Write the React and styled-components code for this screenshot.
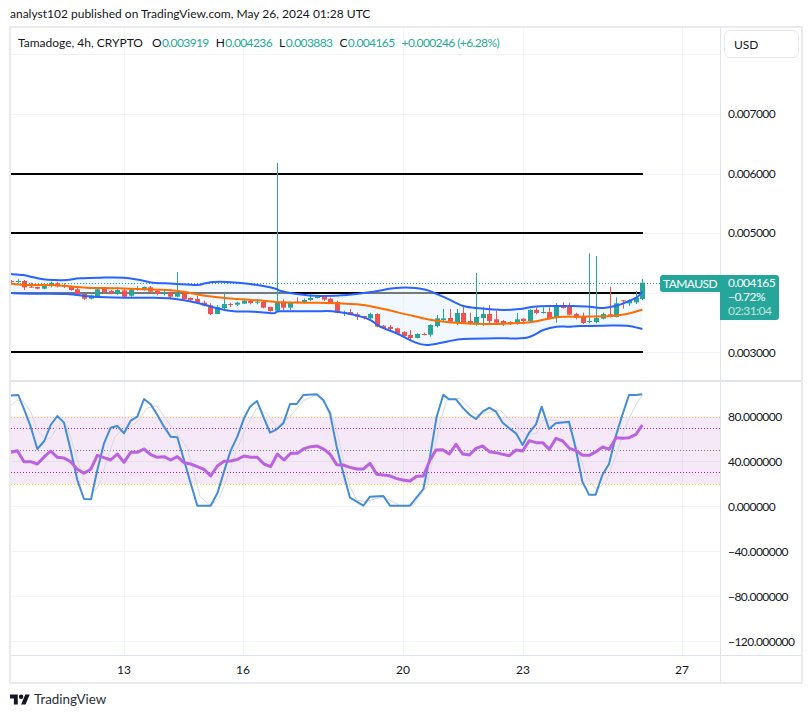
import React from "react";
import styled, { createGlobalStyle } from "styled-components";

const GlobalStyle = createGlobalStyle`
  html, body { margin: 0; padding: 0; background: #fff; }
  #root { width: 812px; height: 718px; overflow: hidden; }
`;
const font = `"Lato", "Noto Sans", "DejaVu Sans", sans-serif`;
const Page = styled.div`
  width: 812px; height: 718px; background: #fff; color: #131722;
  font-family: ${font}; font-size: 12px; display: flex; flex-direction: column;
`;
const Header = styled.div`
  height: 26px; padding-left: 10px; display: flex; align-items: center;
  font-size: 12px; white-space: nowrap;
`;
const Frame = styled.div`
  width: 794px; height: 658px; margin-left: 9px; box-sizing: border-box;
  border: 2px solid #e8eaf0; display: grid;
  grid-template-columns: 709px 81px; grid-template-rows: 352px 275px 27px;
`;
const Pane = styled.div`
  position: relative; overflow: hidden; box-sizing: border-box;
  ${(p) => (p.$divided ? "border-top: 2px solid #e0e3eb;" : "")}
`;
const PaneSvg = styled.svg`display: block;`;
const Legend = styled.div`
  position: absolute; left: 7px; top: 6px; display: flex; align-items: center;
  height: 17px; white-space: nowrap; font-size: 12px; letter-spacing: -0.6px;
`;
const Symbol = styled.span`margin-right: 9px; letter-spacing: 0;`;
const Ohlc = styled.span`
  margin-right: 7px; color: #131722;
  b { font-weight: 400; color: #22ab94; margin-left: 1px; }
`;
const Change = styled.span`color: #22ab94;`;
const Axis = styled.div`
  position: relative; box-sizing: border-box; border-left: 1px solid #e0e3eb;
  padding-left: 7px; letter-spacing: -0.55px;
  ${(p) => (p.$divided ? "border-top: 2px solid #e0e3eb;" : "")}
  ${(p) => (p.$pad ? `padding-top: ${p.$pad}px;` : "")}
`;
const CurrencyBox = styled.div`
  box-sizing: border-box; width: 75px; height: 28px; margin: 2px 0 0 -4px; padding-left: 9px;
  display: flex; align-items: center; border: 1px solid #e8eaf0; border-radius: 6px;
  letter-spacing: 0;
`;
const Ticks = styled.div`margin-top: 26px;`;
const Tick = styled.div`
  height: ${(p) => p.$h}px; display: flex; align-items: center; white-space: nowrap;
  ${(p) => (p.$hidden ? "visibility: hidden;" : "")}
`;
const PriceBadge = styled.div`
  position: absolute; left: -1px; top: 247px; width: 59px; height: 45px; box-sizing: border-box;
  background: #26a69a; color: #fff; border-radius: 0 3px 3px 0; padding: 1px 0 0 8px;
  display: flex; flex-direction: column; line-height: 14px;
`;
const Timer = styled.span`opacity: 0.7;`;
const TickerBadge = styled.div`
  position: absolute; right: 100%; top: 0; width: 60px; height: 17px; margin-right: 0;
  background: #26a69a; color: #fff; border-radius: 3px 0 0 3px;
  display: flex; align-items: center; justify-content: center;
`;
const TimeAxis = styled.div`
  box-sizing: border-box; border-top: 1px solid #e0e3eb; display: flex; align-items: center;
`;
const AxisCorner = styled.div`border-top: 1px solid #e0e3eb; border-left: 1px solid #e0e3eb;`;
const TimeLabel = styled.span`
  flex: 0 0 40px; margin-left: ${(p) => p.$m}px; text-align: center;
`;
const Footer = styled.div`
  display: flex; align-items: center; gap: 4px; padding: 7px 0 0 10px;
  font-size: 13.4px; color: #2a2e39;
`;

const rows = (x0, y0, list) =>
  list.map(([x, k, bt, bb, wt, wb]) => ({
    x: Math.round(x0 + x / 3) + 0.5, up: k === "u",
    bt: y0 + bt / 3, bb: y0 + bb / 3, wt: y0 + wt / 3, wb: y0 + wb / 3,
  }));

const candles = [
  ...rows(0, 260, [
    [34,"d",63,66,60,68],[55,"u",63,66,58,70],[73,"d",63,82,60,90],[94,"d",80,82,68,84],[112,"d",81,86,80,88],
    [133,"u",75,86,70,88],[154,"u",69,78,65,82],[172,"d",70,79,66,82],[193,"d",77,79,70,84],[213,"d",80,90,78,92],
    [232,"d",88,104,84,107],[253,"d",102,116,100,120],[274,"u",107,116,104,118],[292,"u",88,109,86,111],[313,"d",87,96,82,102],
    [334,"d",93,101,90,103],[352,"u",90,101,82,104],[373,"d",91,110,88,112],[394,"u",88,107,85,110],[412,"u",86,88,78,92],
    [432,"u",81,90,80,92],[451,"d",82,95,78,97],[472,"d",92,102,90,106],[492,"u",98,100,92,106],[511,"d",98,110,95,119],
    [532,"u",100,110,36,112],[553,"d",100,117,96,119],[571,"d",114,120,112,125],[592,"d",117,128,108,132],[612,"d",128,137,122,139],
    [631,"d",136,162,130,165],[652,"u",141,162,135,163],[673,"u",132,144,100,147],[691,"d",132,134,128,141],[712,"u",128,134,125,138],
    [731,"u",122,131,118,132],[751,"d",123,129,120,133],[772,"u",125,127,117,133],[790,"d",126,143,124,145],[811,"d",141,153,140,155],
    [832,"u",125,152,-291,153],[850,"d",125,143,118,152],[869,"u",127,143,125,150],
  ]),
  ...rows(280, 270, [
    [51,"d",95,97,82,100],[71,"u",90,99,85,100],[91,"u",84,90,72,93],[111,"u",80,84,75,85],[131,"d",81,89,79,93],
    [151,"d",86,99,83,102],[172,"d",96,128,92,130],[191,"u",126,128,122,138],[211,"d",126,134,117,136],[230,"d",133,140,127,150],
    [251,"d",138,142,138,148],[271,"u",132,145,128,148],[290,"d",132,170,130,172],[310,"d",167,174,165,176],[331,"d",171,177,165,180],
    [350,"d",175,191,173,192],[371,"d",186,198,184,200],[391,"d",195,204,180,210],[410,"u",192,204,190,205],[431,"d",192,194,188,196],
    [451,"u",165,194,163,200],[470,"u",145,168,135,172],[490,"u",145,150,117,155],[509,"d",144,155,117,158],[530,"u",129,158,117,165],
    [550,"d",129,158,105,162],[569,"d",153,162,128,164],[589,"u",141,163,9,167],[610,"u",132,144,112,168],[628,"d",132,153,105,164],
    [649,"d",148,158,123,160],[670,"d",153,162,150,168],[690,"d",156,161,154,165],[710,"u",148,162,129,164],[730,"d",146,153,145,163],
    [749,"u",120,153,118,154],[769,"d",120,129,112,133],[788,"u",126,129,112,131],[808,"d",126,145,112,148],[828,"u",106,144,99,158],
    [848,"d",106,114,97,116],[868,"d",110,134,98,136],
  ]),
  ...rows(560, 240, [
    [49,"d",222,234,218,238],[68,"d",229,249,218,252],[88,"u",243,245,40,250],[109,"u",234,246,48,250],[128,"u",222,236,218,238],
    [149,"d",223,231,140,232],[169,"u",190,231,172,232],[189,"d",181,183,180,206],[208,"u",182,190,178,198],[229,"u",173,187,153,192],
    [247,"u",128,177,117,180],
  ]),
];

const pts = (x0, y0, list) => list.map(([x, y]) => [x0 + x / 3, y0 + y / 3]);

const upper = [
  ...pts(0,260,[[30,42],[70,45],[100,52],[130,58],[160,60],[200,60],[240,55],[300,53],[370,53],[420,60],[460,68],[520,71],[590,75],[615,70],[640,66],[680,66],[730,70],[790,78],[830,87]]),
  ...pts(280,270,[[0,62],[50,72],[120,78],[200,75],[280,65],[340,55],[390,53],[440,60],[500,85],[550,108],[600,115],[670,120],[720,117],[760,110],[820,108],[860,108]]),
  ...pts(560,240,[[30,198],[88,200],[130,204],[165,198],[190,190],[230,172],[247,155]]),
];
const middle = [
  ...pts(0,260,[[30,71],[90,75],[170,76],[260,83],[350,85],[430,88],[500,90],[560,97],[620,108],[700,116],[790,122],[830,126]]),
  ...pts(280,270,[[0,97],[100,98],[230,103],[300,115],[400,138],[470,152],[550,160],[620,162],[700,160],[760,155],[820,143],[860,140]]),
  ...pts(560,240,[[30,230],[60,230],[150,228],[200,222],[247,209]]),
];
const lower = [
  ...pts(0,260,[[30,99],[100,101],[200,102],[280,110],[370,113],[450,113],[520,116],[590,128],[650,145],[700,154],[760,155],[820,160]]),
  ...pts(280,270,[[0,124],[100,124],[170,125],[260,145],[300,170],[350,190],[400,215],[440,225],[500,215],[550,207],[650,205],[740,203],[790,180],[830,170],[860,170]]),
  ...pts(560,240,[[30,260],[60,258],[130,257],[200,257],[247,267]]),
];

const kLine = [
  ...pts(0,380,[[30,47],[55,45],[75,95],[92,140],[112,207],[133,183],[152,135],[172,108],[192,128],[212,210],[232,300],[252,357],[273,358],[292,270],[312,190],[332,143],[352,138],[372,160],[392,122],[412,110],[432,57],[452,73],[472,105],[492,140],[512,170],[532,172],[552,240],[572,310],[592,377],[632,377],[652,340],[672,275],[692,212],[712,170],[732,115],[750,80],[771,63],[790,110],[810,158],[830,148],[850,130],[870,72],[890,72],[910,45],[950,43],[970,60],[990,100]]),
  ...pts(330,380,[[20,200],[40,280],[60,353],[100,377],[120,350],[160,348],[180,377],[240,377],[280,327],[300,230],[320,110],[340,44],[357,58],[378,58],[400,85],[420,105],[438,117],[458,95],[478,83],[498,95],[518,128],[538,145],[558,160],[578,195],[598,157],[618,133],[635,80],[657,147],[677,130],[717,125],[737,205],[757,305],[777,344],[797,344],[817,285],[837,252],[857,170],[877,105],[897,45],[917,45],[937,43]]),
];
const dLine = [
  ...pts(0,380,[[30,80],[50,60],[70,65],[92,95],[112,150],[133,177],[152,175],[172,140],[192,125],[212,170],[232,240],[252,300],[285,332],[300,310],[320,240],[345,170],[372,145],[400,135],[420,115],[440,85],[470,78],[500,120],[532,165],[560,200],[580,270],[600,350],[632,377],[660,350],[690,270],[710,210],[740,140],[770,85],[800,100],[830,140],[870,110],[910,62],[950,43],[990,90]]),
  ...pts(330,380,[[20,150],[40,240],[60,320],[80,360],[105,365],[160,350],[210,377],[250,375],[290,320],[310,230],[330,130],[350,60],[390,55],[440,105],[510,90],[550,130],[590,165],[620,160],[640,120],[680,122],[717,130],[740,200],[770,290],[800,330],[830,300],[860,220],[890,130],[920,70],[937,47]]),
];
const rsi = [
  ...pts(0,380,[[30,217],[52,212],[72,245],[92,245],[112,252],[133,230],[152,213],[172,232],[192,234],[212,245],[232,268],[252,280],[272,268],[292,226],[312,233],[332,240],[352,222],[372,247],[392,217],[412,217],[432,207],[452,224],[472,232],[492,230],[512,240],[532,230],[552,248],[572,252],[592,260],[612,268],[632,288],[652,258],[672,244],[692,243],[712,238],[732,228],[752,232],[772,232],[792,252],[812,260],[832,222],[852,240],[872,220],[892,220],[912,206],[932,200],[952,198],[972,208],[990,222]]),
  ...pts(330,380,[[20,254],[40,255],[60,262],[80,267],[100,267],[120,250],[140,283],[178,287],[198,295],[218,300],[240,303],[260,289],[280,288],[300,240],[318,210],[338,209],[358,222],[378,193],[398,222],[418,225],[438,205],[458,198],[478,215],[498,218],[518,223],[538,227],[558,210],[578,213],[598,182],[618,188],[638,188],[658,208],[678,175],[698,183],[718,205],[738,212],[758,226],[778,226],[798,215],[818,201],[838,208],[858,173],[878,175],[898,173],[918,163],[937,135]]),
];

const smooth = (p) => {
  let d = `M${p[0][0]} ${p[0][1]}`;
  for (let i = 0; i < p.length - 1; i++) {
    const a = p[Math.max(i - 1, 0)], b = p[i], c = p[i + 1], e = p[Math.min(i + 2, p.length - 1)];
    d += `C${b[0] + (c[0] - a[0]) / 6} ${b[1] + (c[1] - a[1]) / 6} ${c[0] - (e[0] - b[0]) / 6} ${c[1] - (e[1] - b[1]) / 6} ${c[0]} ${c[1]}`;
  }
  return d;
};
const poly = (p) => p.map((q) => q.join(",")).join(" ");
const bandFill = poly([...upper, ...[...lower].reverse()]);

const vGrid = [124.5, 243.5, 403.5, 523.5, 682.5];
const GRID = "#f0f3fa";

function VerticalGrid({ y1, y2 }) {
  return vGrid.map((x) => <line key={x} x1={x} x2={x} y1={y1} y2={y2} stroke={GRID} />);
}

function MainChart() {
  return (
    <PaneSvg width="709" height="352" viewBox="11 28 709 352">
      <VerticalGrid y1={28} y2={380} />
      {[54.5, 114.5, 174.5, 233.5, 293.5, 352.5].map((y) => (
        <line key={y} x1="11" x2="720" y1={y} y2={y} stroke={GRID} />
      ))}
      {[174, 233, 293, 352].map((y) => (
        <line key={y} x1="10" x2="643" y1={y} y2={y} stroke="#000" strokeWidth="2" />
      ))}
      <polygon points={bandFill} fill="#e3f2fd" fillOpacity="0.5" />
      <line x1="11" x2="660" y1="283.5" y2="283.5" stroke="#26a69a" strokeDasharray="1 2" />
      {candles.map((c, i) => {
        const col = c.up ? "#26a69a" : "#ef5350";
        return (
          <g key={i}>
            <line x1={c.x} x2={c.x} y1={c.wt} y2={c.wb} stroke={col} />
            <rect x={c.x - 2.5} y={c.bt} width="5" height={Math.max(c.bb - c.bt, 1)} fill={col} />
          </g>
        );
      })}
      <path d={smooth(upper)} fill="none" stroke="#2962ff" strokeWidth="2" />
      <path d={smooth(lower)} fill="none" stroke="#2962ff" strokeWidth="2" />
      <path d={smooth(middle)} fill="none" stroke="#ff6d00" strokeWidth="2" />
    </PaneSvg>
  );
}

function Oscillator() {
  return (
    <PaneSvg width="709" height="273" viewBox="11 382 709 273">
      <VerticalGrid y1={382} y2={655} />
      {[416.5, 461.5, 506.5, 551.5, 596.5, 641.5].map((y) => (
        <line key={y} x1="11" x2="720" y1={y} y2={y} stroke={GRID} />
      ))}
      <rect x="11" y="417" width="709" height="67" fill="#9c27b0" fillOpacity="0.1" />
      <line x1="11" x2="720" y1="417.5" y2="417.5" stroke="#f5c242" strokeDasharray="1 2" />
      <line x1="11" x2="720" y1="484.5" y2="484.5" stroke="#ffd600" strokeDasharray="1 2" />
      <line x1="11" x2="720" y1="428.5" y2="428.5" stroke="#a81bc0" strokeDasharray="1 2" />
      <line x1="11" x2="720" y1="472.5" y2="472.5" stroke="#a81bc0" strokeDasharray="1 2" />
      <line x1="11" x2="720" y1="450.5" y2="450.5" stroke="#787b86" strokeDasharray="1 2" />
      <polyline points={poly(dLine)} fill="none" stroke="#d8dae2" strokeWidth="1" />
      <polyline points={poly(kLine)} fill="none" stroke="#428cd8" strokeWidth="2" strokeLinejoin="round" />
      <polyline points={poly(rsi)} fill="none" stroke="#bb62e0" strokeWidth="3" strokeLinejoin="round" />
    </PaneSvg>
  );
}

const Logo = () => (
  <svg width="20" height="15" viewBox="0 2 36 22" fill="#131722">
    <path d="M14 22H7V11H0V4h14v18zM28 22h-8l7.5-18h8L28 22z" />
    <circle cx="20" cy="8" r="4" />
  </svg>
);

const priceTicks = [["0.007000"],["0.006000"],["0.005000"],["0.004000", true],["0.003000"]];
const oscTicks = ["80.000000","40.000000","0.000000","−40.000000","−80.000000","−120.000000"];
const times = [["13",93],["16",79],["20",120],["23",80],["27",119]];

export default function App() {
  return (
    <Page>
      <GlobalStyle />
      <Header>analyst102 published on TradingView.com, May 26, 2024 01:28 UTC</Header>
      <Frame>
        <Pane>
          <MainChart />
          <Legend>
            <Symbol>Tamadoge, 4h, CRYPTO</Symbol>
            <Ohlc>O<b>0.003919</b></Ohlc>
            <Ohlc>H<b>0.004236</b></Ohlc>
            <Ohlc>L<b>0.003883</b></Ohlc>
            <Ohlc>C<b>0.004165</b></Ohlc>
            <Change>+0.000246 (+6.28%)</Change>
          </Legend>
        </Pane>
        <Axis>
          <CurrencyBox>USD</CurrencyBox>
          <Ticks>
            {priceTicks.map(([t, hidden]) => (
              <Tick key={t} $h={59.6} $hidden={hidden}>{t}</Tick>
            ))}
          </Ticks>
          <PriceBadge>
            <TickerBadge>TAMAUSD</TickerBadge>
            <span>0.004165</span>
            <span>−0.72%</span>
            <Timer>02:31:04</Timer>
          </PriceBadge>
        </Axis>
        <Pane $divided>
          <Oscillator />
        </Pane>
        <Axis $divided $pad={11.5}>
          {oscTicks.map((t) => (
            <Tick key={t} $h={45}>{t}</Tick>
          ))}
        </Axis>
        <TimeAxis>
          {times.map(([t, m]) => (
            <TimeLabel key={t} $m={m}>{t}</TimeLabel>
          ))}
        </TimeAxis>
        <AxisCorner />
      </Frame>
      <Footer>
        <Logo />
        TradingView
      </Footer>
    </Page>
  );
}
